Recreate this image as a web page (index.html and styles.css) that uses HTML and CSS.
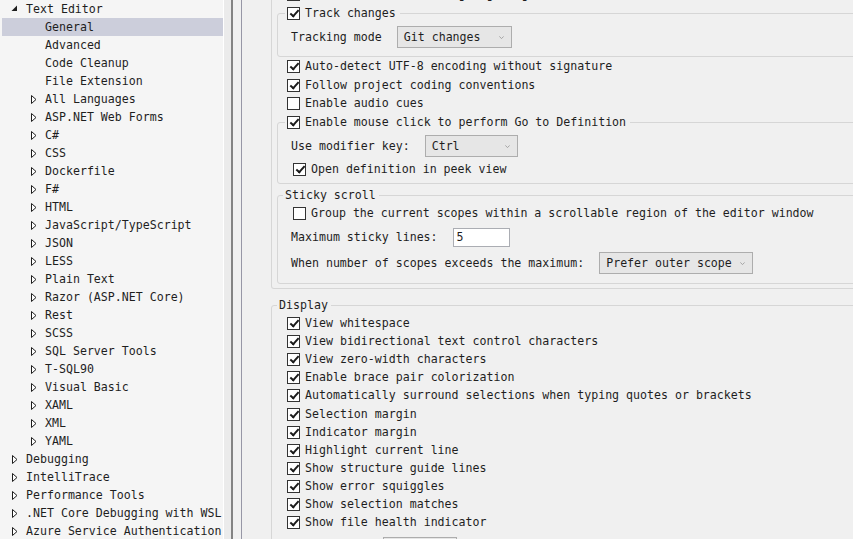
FILE: index.html
```html
<!DOCTYPE html>
<html lang="en">
<head>
<meta charset="utf-8">
<title>Options - Text Editor - General</title>
<link rel="stylesheet" href="styles.css">
</head>
<body>
<div class="app">
  <nav class="tree">
    <div class="node l0"><span class="tw"><svg class="tri-open" width="7" height="7" viewBox="0 0 7 7"><polygon points="6,0.5 6,6 0.5,6" /></svg></span>Text Editor</div>
    <div class="node l1 sel"><span class="tw"></span>General</div>
    <div class="node l1"><span class="tw"></span>Advanced</div>
    <div class="node l1"><span class="tw"></span>Code Cleanup</div>
    <div class="node l1"><span class="tw"></span>File Extension</div>
    <div class="node l1"><span class="tw"><svg class="tri" width="6" height="9" viewBox="0 0 6 9"><polygon points="0.5,0.5 5,4.5 0.5,8.5" /></svg></span>All Languages</div>
    <div class="node l1"><span class="tw"><svg class="tri" width="6" height="9" viewBox="0 0 6 9"><polygon points="0.5,0.5 5,4.5 0.5,8.5" /></svg></span>ASP.NET Web Forms</div>
    <div class="node l1"><span class="tw"><svg class="tri" width="6" height="9" viewBox="0 0 6 9"><polygon points="0.5,0.5 5,4.5 0.5,8.5" /></svg></span>C#</div>
    <div class="node l1"><span class="tw"><svg class="tri" width="6" height="9" viewBox="0 0 6 9"><polygon points="0.5,0.5 5,4.5 0.5,8.5" /></svg></span>CSS</div>
    <div class="node l1"><span class="tw"><svg class="tri" width="6" height="9" viewBox="0 0 6 9"><polygon points="0.5,0.5 5,4.5 0.5,8.5" /></svg></span>Dockerfile</div>
    <div class="node l1"><span class="tw"><svg class="tri" width="6" height="9" viewBox="0 0 6 9"><polygon points="0.5,0.5 5,4.5 0.5,8.5" /></svg></span>F#</div>
    <div class="node l1"><span class="tw"><svg class="tri" width="6" height="9" viewBox="0 0 6 9"><polygon points="0.5,0.5 5,4.5 0.5,8.5" /></svg></span>HTML</div>
    <div class="node l1"><span class="tw"><svg class="tri" width="6" height="9" viewBox="0 0 6 9"><polygon points="0.5,0.5 5,4.5 0.5,8.5" /></svg></span>JavaScript/TypeScript</div>
    <div class="node l1"><span class="tw"><svg class="tri" width="6" height="9" viewBox="0 0 6 9"><polygon points="0.5,0.5 5,4.5 0.5,8.5" /></svg></span>JSON</div>
    <div class="node l1"><span class="tw"><svg class="tri" width="6" height="9" viewBox="0 0 6 9"><polygon points="0.5,0.5 5,4.5 0.5,8.5" /></svg></span>LESS</div>
    <div class="node l1"><span class="tw"><svg class="tri" width="6" height="9" viewBox="0 0 6 9"><polygon points="0.5,0.5 5,4.5 0.5,8.5" /></svg></span>Plain Text</div>
    <div class="node l1"><span class="tw"><svg class="tri" width="6" height="9" viewBox="0 0 6 9"><polygon points="0.5,0.5 5,4.5 0.5,8.5" /></svg></span>Razor (ASP.NET Core)</div>
    <div class="node l1"><span class="tw"><svg class="tri" width="6" height="9" viewBox="0 0 6 9"><polygon points="0.5,0.5 5,4.5 0.5,8.5" /></svg></span>Rest</div>
    <div class="node l1"><span class="tw"><svg class="tri" width="6" height="9" viewBox="0 0 6 9"><polygon points="0.5,0.5 5,4.5 0.5,8.5" /></svg></span>SCSS</div>
    <div class="node l1"><span class="tw"><svg class="tri" width="6" height="9" viewBox="0 0 6 9"><polygon points="0.5,0.5 5,4.5 0.5,8.5" /></svg></span>SQL Server Tools</div>
    <div class="node l1"><span class="tw"><svg class="tri" width="6" height="9" viewBox="0 0 6 9"><polygon points="0.5,0.5 5,4.5 0.5,8.5" /></svg></span>T-SQL90</div>
    <div class="node l1"><span class="tw"><svg class="tri" width="6" height="9" viewBox="0 0 6 9"><polygon points="0.5,0.5 5,4.5 0.5,8.5" /></svg></span>Visual Basic</div>
    <div class="node l1"><span class="tw"><svg class="tri" width="6" height="9" viewBox="0 0 6 9"><polygon points="0.5,0.5 5,4.5 0.5,8.5" /></svg></span>XAML</div>
    <div class="node l1"><span class="tw"><svg class="tri" width="6" height="9" viewBox="0 0 6 9"><polygon points="0.5,0.5 5,4.5 0.5,8.5" /></svg></span>XML</div>
    <div class="node l1"><span class="tw"><svg class="tri" width="6" height="9" viewBox="0 0 6 9"><polygon points="0.5,0.5 5,4.5 0.5,8.5" /></svg></span>YAML</div>
    <div class="node l0"><span class="tw"><svg class="tri" width="6" height="9" viewBox="0 0 6 9"><polygon points="0.5,0.5 5,4.5 0.5,8.5" /></svg></span>Debugging</div>
    <div class="node l0"><span class="tw"><svg class="tri" width="6" height="9" viewBox="0 0 6 9"><polygon points="0.5,0.5 5,4.5 0.5,8.5" /></svg></span>IntelliTrace</div>
    <div class="node l0"><span class="tw"><svg class="tri" width="6" height="9" viewBox="0 0 6 9"><polygon points="0.5,0.5 5,4.5 0.5,8.5" /></svg></span>Performance Tools</div>
    <div class="node l0"><span class="tw"><svg class="tri" width="6" height="9" viewBox="0 0 6 9"><polygon points="0.5,0.5 5,4.5 0.5,8.5" /></svg></span>.NET Core Debugging with WSL</div>
    <div class="node l0"><span class="tw"><svg class="tri" width="6" height="9" viewBox="0 0 6 9"><polygon points="0.5,0.5 5,4.5 0.5,8.5" /></svg></span>Azure Service Authentication</div>
  </nav>

  <div class="splitter">
    <div class="sp-a"></div>
    <div class="sp-b"></div>
    <div class="sp-c"></div>
    <div class="sp-d"></div>
  </div>

  <main class="panel">
    <div class="pane">
      <fieldset class="grp settings">
        <div class="row"><span class="cb on"></span>Automatic delimiter highlighting</div>

        <fieldset class="grp sub track">
          <legend class="lg-cb"><span class="cb on"></span>Track changes</legend>
          <div class="row ctl-row lab">Tracking mode<span class="combo w-git">Git changes<svg class="chev" width="7" height="4" viewBox="0 0 7 4"><polyline points="0.5,0.5 3.5,3.5 6.5,0.5" /></svg></span></div>
        </fieldset>

        <div class="row"><span class="cb on"></span>Auto-detect UTF-8 encoding without signature</div>
        <div class="row mt1"><span class="cb on"></span>Follow project coding conventions</div>
        <div class="row"><span class="cb"></span>Enable audio cues</div>

        <fieldset class="grp sub goto">
          <legend class="lg-cb"><span class="cb on"></span>Enable mouse click to perform Go to Definition</legend>
          <div class="row ctl-row lab">Use modifier key:<span class="combo w-ctrl">Ctrl<svg class="chev" width="7" height="4" viewBox="0 0 7 4"><polyline points="0.5,0.5 3.5,3.5 6.5,0.5" /></svg></span></div>
          <div class="row inner peek"><span class="cb on"></span>Open definition in peek view</div>
        </fieldset>

        <fieldset class="grp sub sticky">
          <legend class="lg-txt">Sticky scroll</legend>
          <div class="row inner"><span class="cb"></span>Group the current scopes within a scrollable region of the editor window</div>
          <div class="row ctl-row lab mt4">Maximum sticky lines:<span class="num">5</span></div>
          <div class="row ctl-row lab mt4">When number of scopes exceeds the maximum:<span class="combo w-scope">Prefer outer scope<svg class="chev" width="7" height="4" viewBox="0 0 7 4"><polyline points="0.5,0.5 3.5,3.5 6.5,0.5" /></svg></span></div>
        </fieldset>
      </fieldset>

      <fieldset class="grp display">
        <legend class="lg-txt">Display</legend>
        <div class="row"><span class="cb on"></span>View whitespace</div>
        <div class="row"><span class="cb on"></span>View bidirectional text control characters</div>
        <div class="row"><span class="cb on"></span>View zero-width characters</div>
        <div class="row"><span class="cb on"></span>Enable brace pair colorization</div>
        <div class="row"><span class="cb on"></span>Automatically surround selections when typing quotes or brackets</div>
        <div class="row mt1"><span class="cb on"></span>Selection margin</div>
        <div class="row"><span class="cb on"></span>Indicator margin</div>
        <div class="row"><span class="cb on"></span>Highlight current line</div>
        <div class="row"><span class="cb on"></span>Show structure guide lines</div>
        <div class="row"><span class="cb on"></span>Show error squiggles</div>
        <div class="row"><span class="cb on"></span>Show selection matches</div>
        <div class="row"><span class="cb on"></span>Show file health indicator</div>
        <div class="row ctl-row zoomrow">Zoom level:<span class="combo w-zoom">100 %<svg class="chev" width="7" height="4" viewBox="0 0 7 4"><polyline points="0.5,0.5 3.5,3.5 6.5,0.5" /></svg></span></div>
      </fieldset>
    </div>
  </main>
</div>
</body>
</html>
```

FILE: styles.css
```css
* { box-sizing: border-box; }

html, body {
  margin: 0;
  padding: 0;
  height: 539px;
  overflow: hidden;
}

body {
  font-family: "DejaVu Sans Mono", "Liberation Mono", monospace;
  font-size: 11.6px;
  color: #1e1e1e;
  background: #f0f0f0;
}

.app {
  display: flex;
  height: 539px;
  overflow: hidden;
}

/* ---------- tree ---------- */
.tree {
  flex: 0 0 224px;
  width: 224px;
  background: #f5f5f5;
  border-right: 1px solid #ffffff;
  padding-left: 2px;
  overflow: hidden;
}

.node {
  display: flex;
  align-items: center;
  height: 18px;
  line-height: 18px;
  white-space: nowrap;
}

.node.l0 { padding-left: 8px; }
.node.l1 { padding-left: 27px; }

.node.sel { background: #cccedb; }

.tw {
  flex: 0 0 16px;
  width: 16px;
  height: 18px;
  display: flex;
  align-items: center;
}

.tri { margin-left: 2px; }
.tri polygon {
  fill: #ffffff;
  stroke: #1e1e1e;
  stroke-width: 1;
}

.tri-open { margin-left: 1px; margin-top: -1px; }
.tri-open polygon { fill: #1e1e1e; }

/* ---------- splitter ---------- */
.splitter {
  display: flex;
  flex: 0 0 18px;
  height: 539px;
}
.sp-a { width: 7px; background: #ebebeb; }
.sp-b { width: 2px; background: #838383; }
.sp-c { width: 8px; background: #f0f0f0; }
.sp-d { width: 1px; background: #9797a6; }

/* ---------- right panel ---------- */
.panel {
  flex: 1 1 auto;
  overflow: hidden;
  background: #f0f0f0;
}

.pane {
  width: 700px;
  margin-top: -15px;
}

.grp {
  margin: 0;
  padding: 0;
  min-width: 0;
  border: 1px solid #d6d6d6;
  border-radius: 3px;
}

.settings {
  margin-left: 29px;
  padding: 0 0 4px 15px;
  border-top: none;
  border-radius: 0 0 3px 3px;
}

.sub {
  margin-left: -10px;
}

.track { margin-top: 1px; padding: 4px 0 8px 0; }
.goto  { margin-top: 1px; padding: 4px 0 5px 0; }
.sticky { margin-top: 2px; padding: 0 0 9px 0; }

.display {
  margin: 7px 0 0 29px;
  padding: 0 0 0 15px;
}

legend {
  padding: 0;
  line-height: 18px;
  height: 18px;
  display: flex;
  align-items: center;
  white-space: nowrap;
}

.lg-cb { margin-left: 7px; padding: 0 4px 0 2px; }
.lg-txt { padding: 0 3px 0 2px; }
.sticky .lg-txt { margin-left: 5px; }
.display .lg-txt { margin-left: -10px; }

.row {
  display: flex;
  align-items: center;
  height: 18px;
  line-height: 18px;
  white-space: nowrap;
}

.mt1 { margin-top: 1px; }
.mt4 { margin-top: 4px; }

.row.inner { padding-left: 15px; }
.row.peek { margin-top: 3px; }

.ctl-row { height: 22px; }
.row.lab { padding-left: 13px; }
.zoomrow { margin-top: 6px; padding-left: 4px; }

/* checkbox */
.cb {
  position: relative;
  flex: 0 0 13px;
  width: 13px;
  height: 13px;
  margin-right: 5px;
  background: #ffffff;
  border: 1px solid #333333;
}

.cb.on::after {
  content: "";
  position: absolute;
  left: 3.5px;
  top: 0.5px;
  width: 3px;
  height: 7px;
  border: solid #1a1a1a;
  border-width: 0 2px 2px 0;
  transform: rotate(42deg);
}

/* combo box */
.combo {
  display: flex;
  align-items: center;
  height: 22px;
  margin-left: 15px;
  padding-left: 6px;
  background: #e6e6e6;
  border: 1px solid #adadad;
}

.chev {
  margin-left: auto;
  margin-right: 7px;
  width: 5px;
  height: 3px;
}
.chev polyline {
  fill: none;
  stroke: #8a8a8a;
  stroke-width: 1;
}

.w-git { width: 115px; }
.w-ctrl { width: 93px; }
.w-scope { width: 154px; }
.w-zoom { width: 74px; }

.num {
  display: flex;
  align-items: center;
  width: 57px;
  height: 19px;
  margin-left: 15px;
  padding-left: 3px;
  background: #ffffff;
  border: 1px solid #abadb3;
}
```
